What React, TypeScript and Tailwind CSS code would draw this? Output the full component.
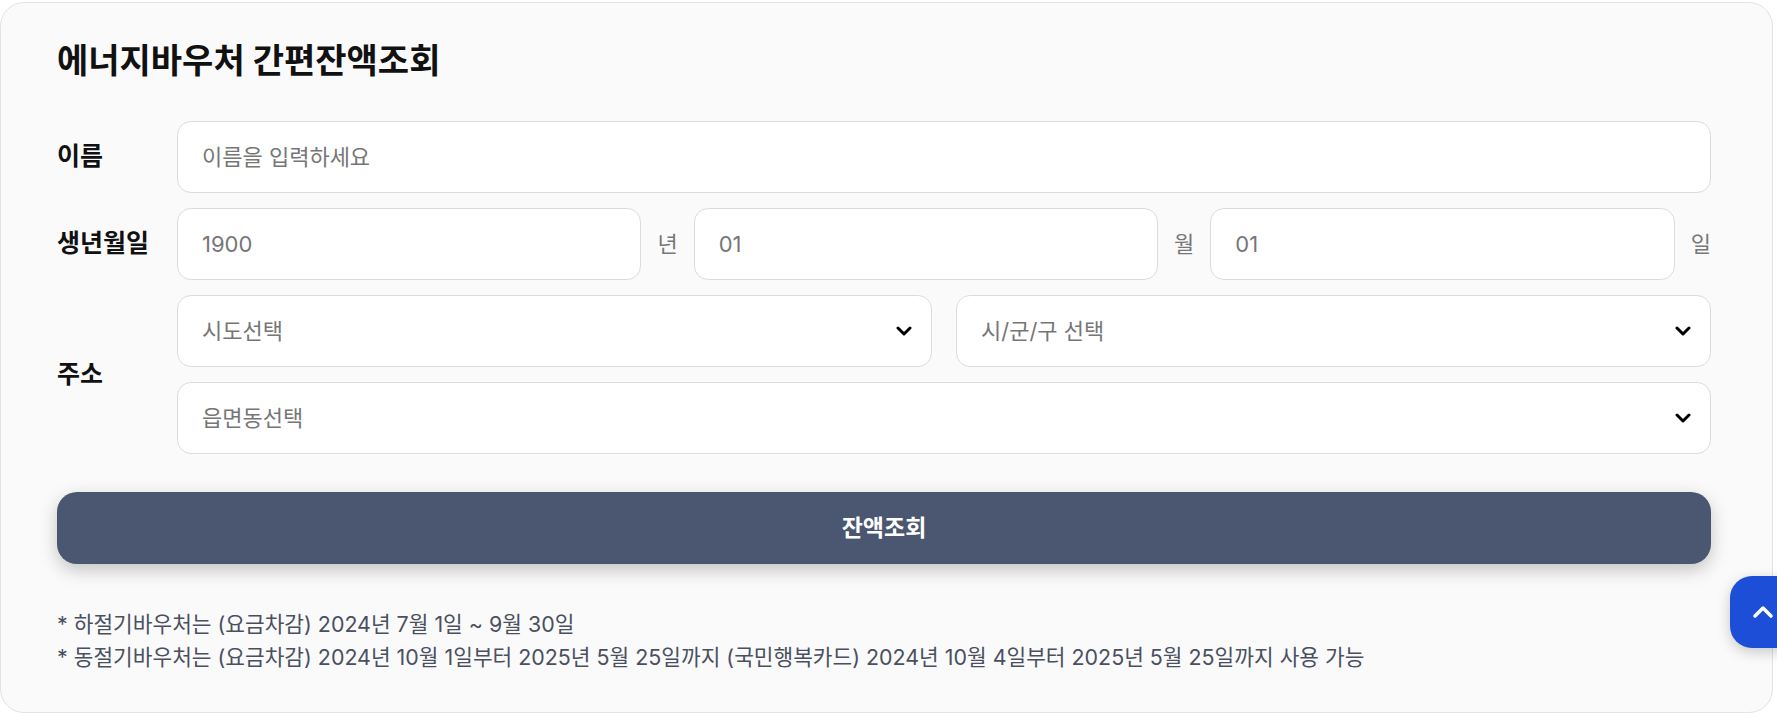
import React from "react";

const font = { fontFamily: 'Inter, "Noto Sans CJK KR", sans-serif' };

function Chevron() {
  return (
    <svg width="16" height="10" viewBox="0 0 16 10" className="shrink-0">
      <polyline points="2,2 8,8 14,2" fill="none" stroke="#000" strokeWidth="3" strokeLinecap="round" strokeLinejoin="round" />
    </svg>
  );
}

function Field({ placeholder, select, className }: { placeholder: string; select?: boolean; className?: string }) {
  return (
    <div className={"h-[72px] rounded-[14px] border border-[#dcdcdc] bg-white flex items-center justify-between pl-[24px] pr-[19px] " + (className ?? "flex-1")}>
      <span className="text-[22px] text-[#767676]">{placeholder}</span>
      {select ? <Chevron /> : null}
    </div>
  );
}

export default function App() {
  return (
    <div className="relative w-[1777px] h-[717px] bg-white overflow-hidden" style={font}>
      <div className="pt-[2px]">
        <div className="w-[1773px] h-[711px] rounded-[24px] border border-[#e3e3e3] bg-[#fafafa] pl-[56px] pr-[61px] pt-[38px]">
          <h1 className="text-[34px] leading-[40px] font-bold text-[#111]">에너지바우처 간편잔액조회</h1>

          <div className="mt-[40px] flex flex-col gap-[15px]">
            <div className="flex items-center">
              <div className="w-[120px] text-[25px] font-bold text-[#111]">이름</div>
              <Field placeholder="이름을 입력하세요" />
            </div>

            <div className="flex items-center">
              <div className="w-[120px] text-[25px] font-bold text-[#111]">생년월일</div>
              <div className="flex-1 flex items-center gap-[16px]">
                <Field placeholder="1900" />
                <span className="text-[22px] text-[#777]">년</span>
                <Field placeholder="01" />
                <span className="text-[22px] text-[#777]">월</span>
                <Field placeholder="01" />
                <span className="text-[22px] text-[#777]">일</span>
              </div>
            </div>

            <div className="flex items-center">
              <div className="w-[120px] text-[25px] font-bold text-[#111]">주소</div>
              <div className="flex-1 flex flex-col gap-[15px]">
                <div className="flex gap-[24px]">
                  <Field placeholder="시도선택" select />
                  <Field placeholder="시/군/구 선택" select />
                </div>
                <Field placeholder="읍면동선택" select className="w-full" />
              </div>
            </div>
          </div>

          <button className="mt-[38px] w-full h-[72px] rounded-[20px] bg-[#4b5670] text-white text-[23px] font-bold shadow-[0_6px_18px_rgba(0,0,0,0.22)]">
            잔액조회
          </button>

          <div className="mt-[44px] text-[21.4px] leading-[33px] text-[#4a5060]">
            <p>* 하절기바우처는 (요금차감) 2024년 7월 1일 ~ 9월 30일</p>
            <p>* 동절기바우처는 (요금차감) 2024년 10월 1일부터 2025년 5월 25일까지 (국민행복카드) 2024년 10월 4일부터 2025년 5월 25일까지 사용 가능</p>
          </div>
        </div>
      </div>

      <div className="absolute left-[1730px] top-[576px] w-[72px] h-[72px] rounded-[22px] bg-[#1d4ed8] shadow-[0_4px_14px_rgba(0,0,0,0.2)] flex items-center pl-[22px]">
        <svg width="22" height="14" viewBox="0 0 22 14">
          <polyline points="3,11 11,3 19,11" fill="none" stroke="#fff" strokeWidth="3.5" strokeLinecap="round" strokeLinejoin="round" />
        </svg>
      </div>
    </div>
  );
}
